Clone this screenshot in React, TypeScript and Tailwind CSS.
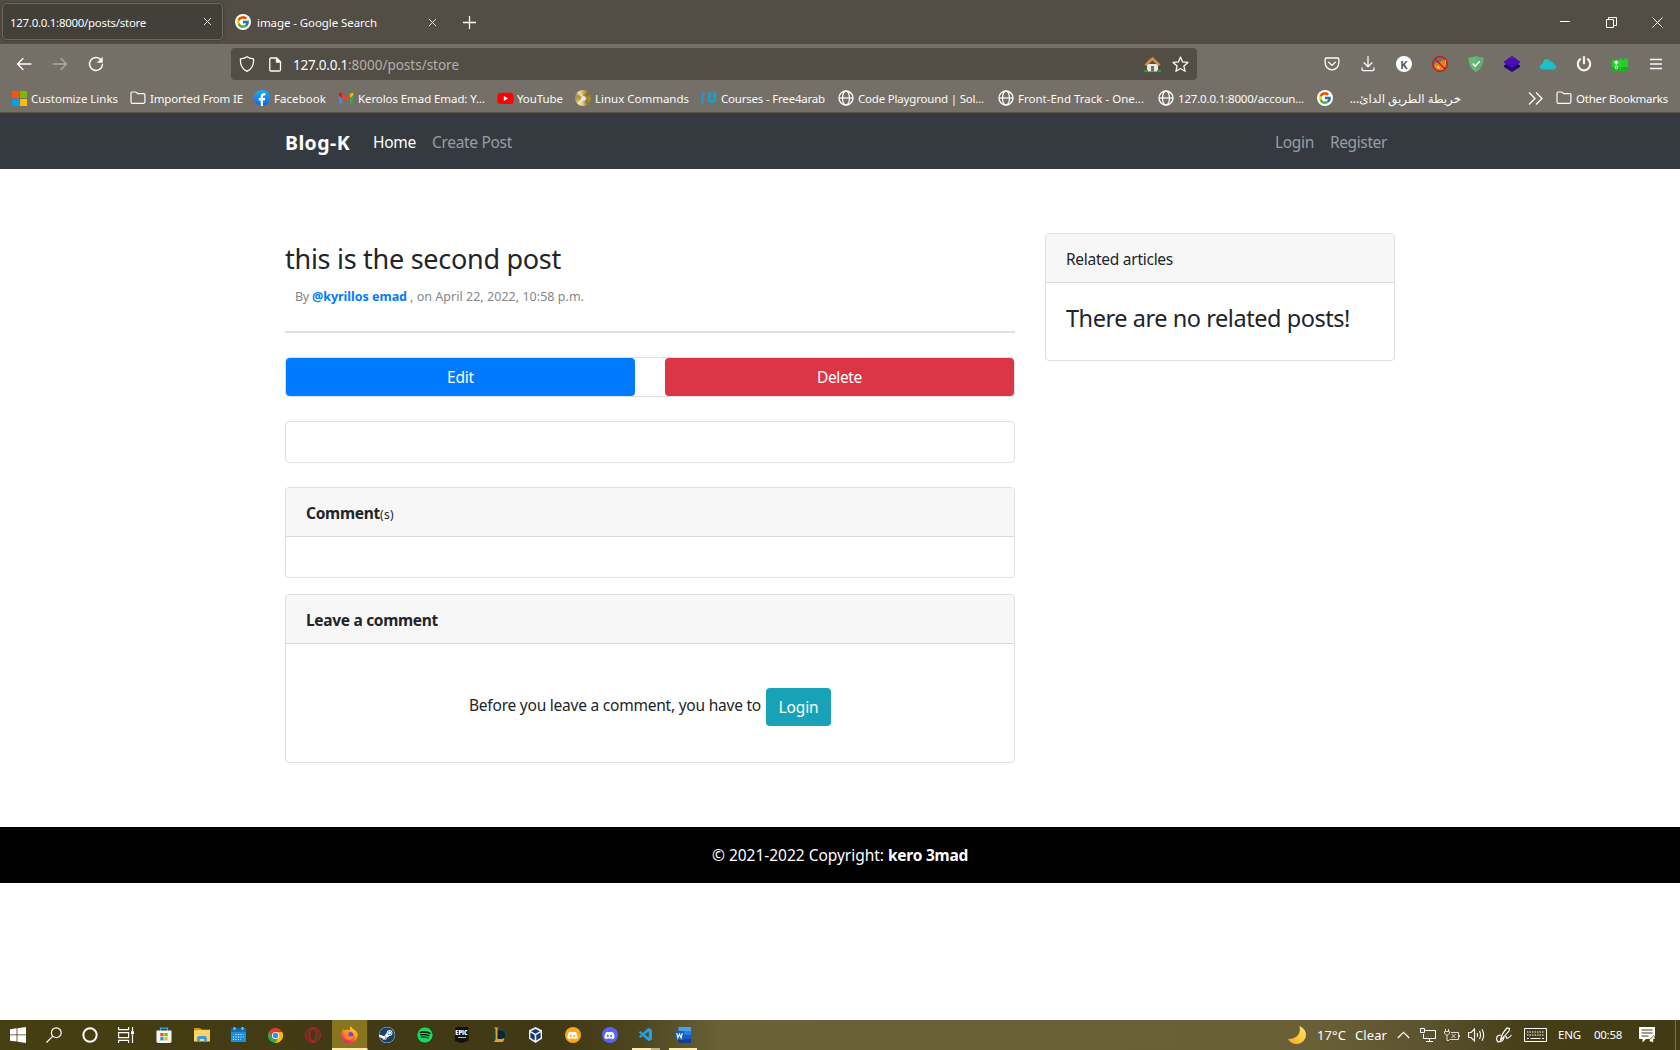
import { useLayoutEffect, useRef, type ReactNode } from "react";
import { FcGoogle } from "react-icons/fc";
import { FaSteam, FaSpotify, FaDiscord, FaYoutube } from "react-icons/fa";
import { VscVscode } from "react-icons/vsc";

/** A single-line label whose tracking is adjusted so that it spans `w` pixels. */
function T({ w, className = "", children }: { w: number; className?: string; children: string }) {
  const ref = useRef<HTMLSpanElement>(null);
  useLayoutEffect(() => {
    const el = ref.current!;
    el.style.letterSpacing = "0px";
    const natural = el.getBoundingClientRect().width;
    el.style.letterSpacing = `${(w - natural) / children.length}px`;
  }, [w, children]);
  return (
    <span ref={ref} className={`inline-block shrink-0 whitespace-pre ${className}`}>
      {children}
    </span>
  );
}

const Slot = ({ className = "", children }: { className?: string; children?: ReactNode }) => (
  <div className={`flex shrink-0 items-center justify-center ${className}`}>{children}</div>
);

const Close = () => (
  <svg width="9" height="9" viewBox="0 0 10 10" fill="none" stroke="#e2e0dc" strokeWidth="1.1">
    <path d="M1 1l8 8M9 1L1 9" />
  </svg>
);

const GoogleIcon = () => (
  <span className="flex size-4 items-center justify-center rounded-full bg-white">
    <FcGoogle size={14} />
  </span>
);

const Folder = () => (
  <svg width="16" height="16" viewBox="0 0 16 16" fill="none" stroke="#fbfbfe" strokeWidth="1.2" strokeLinejoin="round">
    <path d="M1 3.2Q1 2 2.200 2h3.300q.6 0 1 .4L7.600 3.600h6q1.300 0 1.300 1.200v7q0 1.500-1.400 1.500H2.400Q1 13.300 1 11.900z" />
  </svg>
);

const Globe = () => (
  <svg width="16" height="16" viewBox="0 0 16 16" fill="none" stroke="#fbfbfe" strokeWidth="1.3">
    <circle cx="8" cy="8" r="7" />
    <ellipse cx="8" cy="8" rx="3.500" ry="7" />
    <path d="M1 8h14" />
  </svg>
);

const MsLogo = () => (
  <span className="grid size-[15px] grid-cols-2 gap-px">
    <i className="bg-[#f65314]" />
    <i className="bg-[#7cbb00]" />
    <i className="bg-[#00a1f1]" />
    <i className="bg-[#ffbb00]" />
  </span>
);

const FbIcon = () => (
  <svg width="16" height="16" viewBox="0 0 16 16">
    <defs>
      <linearGradient id="fb" x1="0" y1="0" x2="0" y2="1">
        <stop offset="0" stopColor="#19adfc" />
        <stop offset="1" stopColor="#0866f0" />
      </linearGradient>
    </defs>
    <circle cx="8" cy="8" r="8" fill="url(#fb)" />
    <path d="M6.700 16v-5.600H4.700V8h2V6.400c0-2 1.200-3.100 3-3.100.9 0 1.600.1 1.600.1v2h-1c-1 0-1.300.6-1.300 1.200V8h2.200l-.4 2.400H9V16z" fill="#fff" />
  </svg>
);

const GmailIcon = () => (
  <svg width="16" height="16" viewBox="0 0 16 16">
    <path d="M1 4v8.700q0 .8.800.8h2.300V7z" fill="#4285f4" />
    <path d="M15 4v8.700q0 .8-.8.8h-2.300V7z" fill="#34a853" />
    <path d="M11.900 4.200L14 2.800q1.200-.5 1.200 1v1.500L11.900 8z" fill="#fbbc04" />
    <path d="M1 3.800q.2-1.700 1.700-1.100L8 7.200l3.900-3V8L8 11 4.100 8 1 5.500z" fill="#ea4335" />
    <path d="M.9 3.800q.1-1.600 1.600-1.200l1.600 1.500V8L.9 5.500z" fill="#c5221f" />
  </svg>
);

const DiscIcon = () => (
  <span className="flex size-4 items-center justify-center rounded-full bg-[conic-gradient(#c9b560,#8a6a26_50deg,#b08c3a_90deg,#94742b_140deg,#d9c77c_180deg,#f5edb8_215deg,#c0a650_250deg,#a88a3c_290deg,#efe4a6_325deg,#c9b560)]">
    <i className="size-[5px] rounded-full bg-[#e4e4ea]" />
  </span>
);

const TuIcon = () => (
  <svg width="16" height="16" viewBox="0 0 16 16" fill="none" stroke="#1b9fd0">
    <path d="M1.500 13V3.500H5.500" strokeWidth="1.600" />
    <path d="M8 2.500v6q0 3.500 3 3.500t3-3.500v-6" strokeWidth="2.400" />
    <path d="M11 2v6" strokeWidth="1.200" />
  </svg>
);

function Bookmark({ icon, label, w, className }: { icon: ReactNode; label: string; w: number; className: string }) {
  return (
    <div className={`flex shrink-0 items-center gap-1 ${className}`}>
      <Slot className="size-4">{icon}</Slot>
      <T w={w} className="pt-px">{label}</T>
    </div>
  );
}

function TabBar() {
  return (
    <div className="flex h-11 items-center bg-[#524d45] pl-[2px] text-[11.5px] text-[#fbfbfe]">
      <div className="mb-px flex h-[37px] w-[221px] shrink-0 items-center justify-between rounded-[4px] border border-[#6d685e] bg-[#434039] pr-[10px] pl-[7px] shadow-[0_0_3px_rgba(0,0,0,0.35)]">
        <T w={136} className="pt-[2px]">127.0.0.1:8000/posts/store</T>
        <Close />
      </div>
      <div className="ml-3 flex w-[202px] items-center">
        <GoogleIcon />
        <T w={120} className="ml-[6px] pt-px">image - Google Search</T>
        <span className="ml-auto"><Close /></span>
      </div>
      <svg className="ml-[26px]" width="13" height="13" viewBox="0 0 13 13" stroke="#fbfbfe" strokeWidth="1.3">
        <path d="M6.500 0v13M0 6.500h13" />
      </svg>
      <div className="ml-auto flex">
        <Slot className="w-[46px]">
          <svg width="10" height="10" viewBox="0 0 10 10" stroke="#fff"><path d="M0 4.500h10" /></svg>
        </Slot>
        <Slot className="w-[46px]">
          <svg width="11" height="11" viewBox="0 0 11 11" fill="none" stroke="#fff">
            <path d="M.5 2.500h7v8h-7zM2.500 2.500v-2h8v8h-3" />
          </svg>
        </Slot>
        <Slot className="w-[46px]">
          <svg width="11" height="11" viewBox="0 0 11 11" stroke="#fff" strokeWidth="1"><path d="M.5.5l10 10M10.500.5l-10 10" /></svg>
        </Slot>
      </div>
    </div>
  );
}

function Toolbar() {
  const s = { fill: "none", stroke: "#fbfbfe", strokeWidth: 1.3, strokeLinecap: "round", strokeLinejoin: "round" } as const;
  return (
    <div className="flex h-10 items-center bg-[#757067] pl-[6px]">
      <Slot className="w-9">
        <svg width="16" height="16" viewBox="0 0 16 16" {...s}><path d="M15 8H1.500M7 2.500L1.500 8 7 13.500" /></svg>
      </Slot>
      <Slot className="w-9 opacity-40">
        <svg width="16" height="16" viewBox="0 0 16 16" {...s}><path d="M1 8h13.500M9 2.500L14.500 8 9 13.500" /></svg>
      </Slot>
      <Slot className="w-9">
        <svg width="16" height="16" viewBox="0 0 16 16" {...s}>
          <path d="M13.200 4A6.500 6.500 0 1 0 14.500 8.500" strokeWidth="1.500" />
          <path d="M14.500 1.500v5h-5z" fill="#fbfbfe" strokeWidth=".5" />
        </svg>
      </Slot>
      <div className="ml-[117px] flex h-8 w-[966px] shrink-0 items-center rounded-[4px] bg-[#524d45] text-[13.500px]">
        <Slot className="w-8">
          <svg width="16" height="16" viewBox="0 0 16 16" {...s}><path d="M8 .7C6.300 2 4 2.600 1.500 2.900 1 8 3 12.800 8 15.300c5-2.500 7-7.300 6.500-12.400C12 2.600 9.700 2 8 .7z" /></svg>
        </Slot>
        <Slot className="ml-1 w-4">
          <svg width="14" height="15" viewBox="0 0 14 15" {...s}>
            <path d="M3 1h5.500L12.500 5V12.800q0 1.200-1.200 1.200H3q-1.200 0-1.200-1.200V2.200Q1.800 1 3 1z" />
            <path d="M8.500 1v4h4z" fill="#fbfbfe" />
          </svg>
        </Slot>
        <T w={55} className="ml-[10px] pt-[2px] text-[#fbfbfe]">127.0.0.1</T>
        <T w={111} className="pt-[2px] text-[#b3b0aa]">:8000/posts/store</T>
        <Slot className="ml-auto w-7">
          <svg width="17" height="17" viewBox="0 0 17 17">
            <path d="M3 8h11v7.500H3z" fill="#e9e7e4" />
            <path d="M7 10h3v5.500H7z" fill="#6a6f78" />
            <path d="M3.800 2h2v4h-2z" fill="#a3413a" />
            <path d="M8.500 .8L16.500 8.500 14.500 10l-6-5.400L2.500 10 .5 8.500z" fill="#d48f3c" />
            <path d="M0 14h4v2.300H0zM13 14h4v2.300h-4z" fill="#2f9a3a" />
          </svg>
        </Slot>
        <Slot className="mr-[2px] w-[29px]">
          <svg width="17" height="17" viewBox="0 0 17 17" {...s}><path d="M8.500 1l2.100 4.900 5.300.5-4 3.600 1.200 5.300-4.600-2.800-4.600 2.800 1.200-5.300-4-3.600 5.300-.5z" /></svg>
        </Slot>
      </div>
      <div className="ml-[117px] flex">
        <Slot className="w-9">
          <svg width="16" height="16" viewBox="0 0 16 16" {...s}><path d="M2.200 2h11.600q1 0 1 1v4a6.800 6.800 0 0 1-13.600 0V3q0-1 1-1zM4.700 6.200L8 9.400l3.300-3.200" /></svg>
        </Slot>
        <Slot className="w-9">
          <svg width="16" height="16" viewBox="0 0 16 16" {...s}><path d="M8 .7v9.800M4 6.800l4 3.900 4-3.900M2 12v1.300q0 1.400 1.400 1.400h9.200q1.400 0 1.400-1.400V12" /></svg>
        </Slot>
        <Slot className="w-9">
          <span className="flex size-4 items-center justify-center rounded-full bg-white text-[11px] leading-none font-bold text-[#5d5951]">K</span>
        </Slot>
        <Slot className="w-9">
          <svg width="16" height="16" viewBox="0 0 16 16" fill="none">
            <path d="M2 10q.5-3 4-4l2 .5 1-2L11 5l2.500-2 1 6-3 5H4.500z" fill="#ee8113" />
            <path d="M13 3l1.500 2.500-1 1zM4.500 11l2.500-1 1 3z" fill="#fbe6cd" />
            <circle cx="8" cy="8" r="7.300" stroke="#c81414" strokeWidth="1.200" />
            <path d="M3 3l10 10" stroke="#c81414" strokeWidth="1.300" />
          </svg>
        </Slot>
        <Slot className="w-9">
          <svg width="16" height="16" viewBox="0 0 16 16" fill="none">
            <path d="M8 0c2 1 5 1.500 7.500 1.700C15.600 8 13 13 8 16 3 13 .4 8 .5 1.700 3 1.500 6 1 8 0z" fill="#67b97a" />
            <path d="M8 0c2 1 5 1.500 7.500 1.700C15.600 8 13 13 8 16z" fill="#60ae72" />
            <path d="M4.700 7.600l2.500 2.600 4.500-5" stroke="#fff" strokeWidth="1.500" />
          </svg>
        </Slot>
        <Slot className="w-9">
          <svg width="16" height="16" viewBox="0 0 16 16">
            <path d="M0 9.500L8 4l8 5.500V11l-8 5-8-5z" fill="#1d0a78" />
            <path d="M8 0l8 5.500v1.200L8 12 0 6.700V5.500z" fill="#4a0db0" />
          </svg>
        </Slot>
        <Slot className="w-9">
          <svg width="16" height="12" viewBox="0 0 16 12"><path d="M3 11.500Q0 11.500 0 8.700T2.800 6Q3 1 6.800 1q2.700 0 3.800 2.500 2.400-.2 2.900 2.300Q16 6.500 16 9q0 2.500-2.500 2.500z" fill="#1dc0c8" /></svg>
        </Slot>
        <Slot className="w-9">
          <svg width="16" height="16" viewBox="0 0 16 16" fill="none" stroke="#f1f1f1" strokeWidth="2.200"><path d="M4.800 2.800a6.200 6.200 0 1 0 6.400 0M8 .3v8" /></svg>
        </Slot>
        <Slot className="w-9">
          <svg width="16" height="16" viewBox="0 0 16 16">
            <path d="M0 4h7l1-1.500h2V4h1l1.500-1.500H16V14q0 .8-.8.8H.8Q0 14.800 0 14z" fill="#22cf28" />
            <path d="M0 11h16v3.500H0z" fill="#17ac1d" />
            <path d="M4.300 4.500v4M2.300 6.500h4" stroke="#fff" strokeWidth="1.700" />
            <circle cx="4.400" cy="11.500" r="1.400" fill="none" stroke="#fff" />
            <path d="M8.500 5v9" stroke="#3bdc40" strokeWidth=".7" />
          </svg>
        </Slot>
        <Slot className="w-9">
          <svg width="16" height="16" viewBox="0 0 16 16" {...s}><path d="M2.500 3.500h11M2.500 8h11M2.500 12.500h11" /></svg>
        </Slot>
      </div>
    </div>
  );
}

function Bookmarks() {
  return (
    <div className="flex h-[29px] items-center border-b border-[#59544b] bg-[#757067] pl-[11px] text-[11.5px] text-[#fbfbfe]">
      <Bookmark className="w-[119px]" icon={<MsLogo />} label="Customize Links" w={87} />
      <Bookmark className="w-[124px]" icon={<Folder />} label="Imported From IE" w={93} />
      <Bookmark className="w-[84px]" icon={<FbIcon />} label="Facebook" w={52} />
      <Bookmark className="w-[159px]" icon={<GmailIcon />} label="Kerolos Emad Emad: Y..." w={127} />
      <Bookmark
        className="w-[78px]"
        icon={<span className="relative flex"><i className="absolute inset-x-1 inset-y-1.5 bg-white" /><FaYoutube size={17} className="relative text-[#f00]" /></span>}
        label="YouTube"
        w={46}
      />
      <Bookmark className="w-[126px]" icon={<DiscIcon />} label="Linux Commands" w={94} />
      <Bookmark className="w-[137px]" icon={<TuIcon />} label="Courses - Free4arab" w={104} />
      <Bookmark className="w-[160px]" icon={<Globe />} label="Code Playground | Sol..." w={126} />
      <Bookmark className="w-[160px]" icon={<Globe />} label="Front-End Track - One..." w={126} />
      <Bookmark className="w-[159px]" icon={<Globe />} label="127.0.0.1:8000/accoun..." w={126} />
      <GoogleIcon />
      <span dir="rtl" className="ml-[17px] w-[111px] shrink-0 pt-px font-['Noto_Sans','DejaVu_Sans',sans-serif] text-[11.900px] whitespace-nowrap">
        خريطة الطريق الدائ...
      </span>
      <svg className="ml-auto" width="15" height="13" viewBox="0 0 15 13" fill="none" stroke="#fbfbfe" strokeWidth="1.300">
        <path d="M1 .5l6 6-6 6M8 .5l6 6-6 6" />
      </svg>
      <Bookmark className="ml-[13px] w-[124px]" icon={<Folder />} label="Other Bookmarks" w={92} />
    </div>
  );
}

function Navbar() {
  return (
    <nav className="flex h-14 items-center bg-[#343a40] pt-[3px] pr-[293px] pl-[285px] text-[15.5px] text-[#9a9da0]">
      <T w={65} className="text-[19.500px] font-bold text-white">Blog-K</T>
      <T w={43} className="ml-[23px] text-white">Home</T>
      <T w={80} className="ml-4">Create Post</T>
      <T w={39} className="ml-auto">Login</T>
      <T w={57} className="ml-4">Register</T>
    </nav>
  );
}

function Card({ title, className = "", children }: { title?: ReactNode; className?: string; children?: ReactNode }) {
  return (
    <section className={`flex flex-col overflow-hidden rounded-[4px] border border-[#dfdfdf] bg-white ${className}`}>
      {title && <header className="flex h-[49px] shrink-0 items-center border-b border-[#dadada] bg-[#f7f7f7] px-5 pt-[3px]">{title}</header>}
      {children}
    </section>
  );
}

function Article() {
  return (
    <div className="w-[730px] shrink-0">
      <h1 className="mt-[9px] flex h-[34px] items-center text-[27px]"><T w={276}>this is the second post</T></h1>
      <div className="mt-[11px] flex h-5 items-center pl-[10px] text-[12.500px] text-[#868686]">
        <T w={14}>By</T>
        <T w={95} className="ml-[3px] font-bold text-[#007bff]">@kyrillos emad</T>
        <T w={174} className="ml-[3px]">, on April 22, 2022, 10:58 p.m.</T>
      </div>
      <div className="mt-[24px] h-[2px] bg-[#dfdfdf]" />
      <div className="mt-6 flex h-10 justify-between rounded-[4px] border border-[#dfdfdf] text-white">
        <button className="flex w-[349px] items-center justify-center rounded-[4px] bg-[#007bff] pt-[2px]"><T w={27}>Edit</T></button>
        <button className="flex w-[349px] items-center justify-center rounded-[4px] bg-[#dc3545] pt-[2px]"><T w={45}>Delete</T></button>
      </div>
      <Card className="mt-6 h-[42px]" />
      <Card className="mt-6 h-[91px]" title={<div className="flex items-baseline"><T w={74} className="font-bold">Comment</T><T w={14} className="text-[12px]">(s)</T></div>} />
      <Card className="mt-4 h-[169px]" title={<T w={132} className="font-bold">Leave a comment</T>}>
        <div className="flex h-[126px] items-center justify-center gap-[5px] pt-2">
          <T w={292} className="-mt-[3px]">Before you leave a comment, you have to</T>
          <button className="flex h-[38px] w-[65px] items-center justify-center rounded-[4px] bg-[#17a2b8] pt-[2px] text-white"><T w={40}>Login</T></button>
        </div>
      </Card>
    </div>
  );
}

const TaskItem = ({ children }: { children: ReactNode }) => <Slot className="w-[37px]">{children}</Slot>;

function Taskbar() {
  const t = { fill: "none", stroke: "#fff", strokeWidth: 1.2 } as const;
  return (
    <div className="flex h-[30px] bg-[linear-gradient(90deg,#463f12_0px,#413a14_330px,#403914_560px,#4d461f_640px,#6a6137_720px,#6a6037_1310px,#5d5430_1420px,#443d15_1530px,#413a12_1680px)] text-white">
      <Slot className="w-9">
        <svg width="16" height="16" viewBox="0 0 16 16" fill="#fff"><path d="M0 2.200L6.600 1.300v6.200H0zM7.400 1.200L16 0v7.500H7.400zM0 8.300h6.600v6.300L0 13.700zM7.400 8.300H16V16l-8.600-1.200z" /></svg>
      </Slot>
      <Slot className="w-9">
        <svg width="16" height="16" viewBox="0 0 16 16" {...t}><circle cx="10.300" cy="5.700" r="4.900" /><path d="M6.800 9.200L.5 15.500" /></svg>
      </Slot>
      <Slot className="w-9">
        <svg width="16" height="16" viewBox="0 0 16 16" {...t} strokeWidth={2}><circle cx="8" cy="8" r="6.700" /></svg>
      </Slot>
      <Slot className="w-9">
        <svg width="16" height="16" viewBox="0 0 16 16" {...t}><path d="M.6 0v2.600h10V0M.6 16v-2.600h10V16M.6 5.600h10v5H.6zM14.500 0v4M14.500 7.500V16" /><path d="M13 4.200h3v3h-3z" fill="#fff" stroke="none" /></svg>
      </Slot>
      <Slot className="ml-px w-[37px]">
        <svg width="16" height="16" viewBox="0 0 16 16">
          <path d="M4.500 4V1.200h7V4" fill="none" stroke="#2bb4e9" strokeWidth="1.300" />
          <path d="M.5 3.500h15v10.700q0 1.800-1.800 1.800H2.300Q.5 16 .5 14.200z" fill="#f5f5f5" />
          <path d="M4.300 6h3.300v3.300H4.300z" fill="#f25022" /><path d="M8.400 6h3.300v3.300H8.400z" fill="#7fba00" />
          <path d="M4.300 10.100h3.300v3.300H4.300z" fill="#00a4ef" /><path d="M8.400 10.100h3.300v3.300H8.400z" fill="#ffb900" />
        </svg>
      </Slot>
      <Slot className="ml-px w-[37px]">
        <svg width="16" height="16" viewBox="0 0 16 16">
          <path d="M0 1h6l1.500 1.500V5H0z" fill="#d9920b" /><path d="M0 3.500l7-.8h9V14.500H0z" fill="#fcd268" />
          <path d="M3.200 15V11q0-2 1.800-2h6q1.800 0 1.800 2v4h-2.600v-3H5.800v3z" fill="#3a9ae0" />
        </svg>
      </Slot>
      <TaskItem>
        <svg width="15" height="16" viewBox="0 0 15 16">
          <path d="M0 1.500h15V15H0z" fill="#1a8fe3" /><path d="M0 1.500h15v3.300H0z" fill="#1267b4" />
          <path d="M2.500 0h2v3h-2zM10.500 0h2v3h-2z" fill="#5fd0f5" />
          <path d="M4.500 7.500h8M2 10h10.500M2 12.500h8" stroke="#fff" strokeWidth="1" strokeDasharray="1 1.500" />
        </svg>
      </TaskItem>
      <TaskItem>
        <svg width="15" height="15" viewBox="0 0 16 16">
          <path d="M8 8L1 4a8 8 0 0 0 6.500 12l3.500-6z" fill="#2da94f" />
          <path d="M8 8V4h7A8 8 0 0 1 7.500 16l3.500-6z" fill="#fdbd00" />
          <path d="M1 4l3.500 6L8 8V4h7A8 8 0 0 0 1 4z" fill="#e33b2e" />
          <circle cx="8" cy="8" r="3.800" fill="#fff" /><circle cx="8" cy="8" r="2.900" fill="#4285f4" />
        </svg>
      </TaskItem>
      <TaskItem>
        <svg width="16" height="16" viewBox="0 0 16 16" fill="none" stroke="#c4203a"><circle cx="8" cy="8" r="7.400" /><ellipse cx="8" cy="8" rx="3.300" ry="6" /><ellipse cx="8" cy="8" rx="5" ry="7" strokeWidth=".7" /></svg>
      </TaskItem>
      <Slot className="ml-px w-9 border-r border-b-2 border-r-[#4c4415] border-b-[#fdeeb0] bg-[#87761f]">
        <svg width="17" height="17" viewBox="0 0 16 16">
          <defs>
            <linearGradient id="fox" x1=".8" y1="0" x2=".3" y2="1"><stop offset="0" stopColor="#ffe226" /><stop offset=".45" stopColor="#ff9a1f" /><stop offset=".75" stopColor="#ff4a3c" /><stop offset="1" stopColor="#e31587" /></linearGradient>
          </defs>
          <path d="M9.500 0q.3 2 2.500 3.400Q16 6 15.800 9.300A7.800 7.800 0 0 1 8 16 7.700 7.700 0 0 1 .2 8.500Q.3 5 2.500 2.500q0 1 .5 1.700 1-.7 2.500-.7l3 .5Q8 1.500 9.500 0z" fill="url(#fox)" />
          <circle cx="8.200" cy="8.800" r="3.500" fill="#7542e5" />
          <path d="M3 5q3-1 5.500 1.400Q6 7 7 8.800 9 11 12 9q-1 4-4.500 4Q3 13 3 8.500z" fill="#ff8a1d" />
        </svg>
      </Slot>
      <Slot className="w-[37px]">
        <span className="flex rounded-full bg-white"><FaSteam size={16} className="text-[#14436f]" /></span>
      </Slot>
      <Slot className="ml-px w-[37px]"><span className="flex rounded-full bg-black"><FaSpotify size={16} className="text-[#1ed760]" /></span></Slot>
      <TaskItem>
        <span className="flex h-4 w-[14px] flex-col items-center rounded-[2px] bg-[#101010] [clip-path:polygon(0_0,100%_0,100%_86%,50%_100%,0_86%)]">
          <b className="mt-[2px] font-['Open_Sans',sans-serif] text-[7px] leading-[7px] font-extrabold [font-stretch:75%]">EPIC</b>
          <i className="mt-px h-px w-2 bg-[#bbb]" />
        </span>
      </TaskItem>
      <TaskItem>
        <svg width="16" height="16" viewBox="0 0 16 16"><circle cx="9" cy="8.500" r="6" fill="#0b2531" stroke="#245564" /><path d="M2.500.5h5l-1 1.500v10h4l3-1-1.500 4h-9l1.500-2V2z" fill="#dfa338" /></svg>
      </TaskItem>
      <TaskItem>
        <svg width="15" height="16" viewBox="0 0 15 16"><path d="M7.500 0L14 3.300v8.500L7.500 16 1 11.800V3.300z" fill="#eef2f8" /><path d="M7.500 2L12 4.200 7.500 6.700 3 4.200zM2.400 5.500L6.700 8v5.500l-4.300-2.700zM12.600 5.500L8.300 8v5.500l4.300-2.700z" fill="#17386c" /></svg>
      </TaskItem>
      <TaskItem><span className="flex size-4 items-center justify-center rounded-full bg-[#faa61a]"><FaDiscord size={11} /></span></TaskItem>
      <TaskItem><span className="flex size-4 items-center justify-center rounded-full bg-[#5865f2]"><FaDiscord size={11} /></span></TaskItem>
      <div className="flex w-[37px] flex-col pl-1">
        <Slot className="h-[28px] w-7 pt-[2px]"><VscVscode size={16} className="text-[#219fe8]" /></Slot>
        <div className="flex h-[2px]"><i className="w-[19px] bg-[#fdeeb0]" /><i className="w-[9px] bg-[#bcb389]" /></div>
      </div>
      <div className="flex w-[37px] flex-col pl-1">
        <Slot className="h-[28px] w-7 pt-[2px]">
          <svg width="16" height="16" viewBox="0 0 16 16">
            <path d="M3.500 0H16v4H3.500z" fill="#41a5ee" /><path d="M3.500 4H16v4H3.500z" fill="#2b7cd3" /><path d="M3.500 8H16v4H3.500z" fill="#185abd" /><path d="M3.500 12H16v4H3.500z" fill="#103f91" />
            <path d="M0 4h9v9H0z" fill="#185abd" /><path d="M1.700 6l1.200 5L4.500 7l1.600 4 1.200-5" fill="none" stroke="#fff" strokeWidth="1.100" />
          </svg>
        </Slot>
        <i className="h-[2px] w-7 bg-[#fdeeb0]" />
      </div>

      <div className="ml-auto flex items-center pr-1 text-[13px]">
        <svg width="18" height="18" viewBox="0 0 18 18">
          <defs><linearGradient id="moon" x1="0" y1="1" x2="1" y2="0"><stop offset="0" stopColor="#fba51b" /><stop offset=".5" stopColor="#ffc93c" /><stop offset="1" stopColor="#ffe680" /></linearGradient></defs>
          <path d="M11.500 0Q18 3 18 9a9 9 0 0 1-9 9q-6 0-9-4.800Q14 12 11.500 0z" fill="url(#moon)" />
        </svg>
        <T w={29} className="ml-[11px] pt-[2px]">17°C</T>
        <T w={32} className="ml-[9px] pt-[2px]">Clear</T>
        <svg className="ml-[10px]" width="13" height="8" viewBox="0 0 13 8" {...t}><path d="M.8 7l5.700-5.700L12.200 7" /></svg>
        <svg className="ml-[10px]" width="16" height="14" viewBox="0 0 16 14" {...t}><path d="M5 2.500h10.500v8h-12V6M6 13.500h7M9.500 10.500v3M.5.500h4v4h-4z" strokeWidth="1" /></svg>
        <svg className="ml-2 opacity-80" width="16" height="13" viewBox="0 0 16 13" {...t} strokeWidth={1}><path d="M1.500 0v2.500M4.500 0v2.500M.5 2.500h5v2L3.500 6h-1L.5 4.500zM3 6v5.500h2M7 3.500h7.500v7H5.500M15.500 6v2M7.500 5l4 4M11.500 5l-4 4" /></svg>
        <svg className="ml-2" width="17" height="14" viewBox="0 0 17 14" {...t} strokeWidth={1.100}><path d="M.6 4.500h2.500L6.500 1v12L3.100 9.500H.6zM9 5q1 2 0 4M11.500 3q2 4 0 8M14 1.300q3.300 5.700 0 11.400" /></svg>
        <svg className="ml-[11px]" width="16" height="16" viewBox="0 0 16 16" {...t}><path d="M4.500 13Q6 6 11 1l2.500.5-.5 2.500Q9 9 4.500 13zM5 8Q.5 8 .6 12t4.400 2.500q3-1.500 3-5.500M10 9q0 3 2 2t3.500-3" /></svg>
        <svg className="ml-3" width="23" height="14" viewBox="0 0 23 14" {...t} strokeWidth={1}><path d="M.5.5h22v13H.5z" /><path d="M3 4h17M3 7h17" strokeDasharray="1.500 1" /><path d="M3 10.500h2M6.500 10.500h10M18 10.500h2" /></svg>
        <T w={23} className="ml-[11px] text-[11.500px]">ENG</T>
        <T w={28} className="ml-[13px] text-[11.500px]">00:58</T>
        <svg className="ml-[17px]" width="17" height="16" viewBox="0 0 17 16"><path d="M0 0h16v12H7l-3.500 3.500V12H0z" fill="#fff" /><path d="M2.500 3h11M2.500 6h11M2.500 9h7" stroke="#453e16" /><path d="M10 14.500q0-2.500 3-4l1.500-2 1.500 1-1.500 3.500q1 2-1 2.300z" fill="#fff" stroke="#453e16" strokeWidth=".7" /></svg>
        <i className="ml-[19px] h-[30px] w-px bg-[#77704b]" />
      </div>
    </div>
  );
}

export default function App() {
  return (
    <div className="flex h-[1050px] w-[1680px] flex-col overflow-hidden bg-white font-['Noto_Sans','Open_Sans',sans-serif] text-[15.500px] text-[#212529]">
      <TabBar />
      <Toolbar />
      <Bookmarks />
      <Navbar />
      <main className="flex gap-[30px] pt-16 pl-[285px]">
        <Article />
        <aside className="w-[350px]">
          <Card className="h-[128px]" title={<T w={107}>Related articles</T>}>
            <h2 className="mt-[21px] flex h-[29px] items-center px-5 text-[23.500px]"><T w={284}>There are no related posts!</T></h2>
          </Card>
        </aside>
      </main>
      <footer className="mt-16 flex h-14 items-center justify-center bg-black pt-[2px] text-white">
        <T w={176}>© 2021-2022 Copyright: </T>
        <T w={80} className="font-bold">kero 3mad</T>
      </footer>
      <div className="flex-1" />
      <Taskbar />
    </div>
  );
}
